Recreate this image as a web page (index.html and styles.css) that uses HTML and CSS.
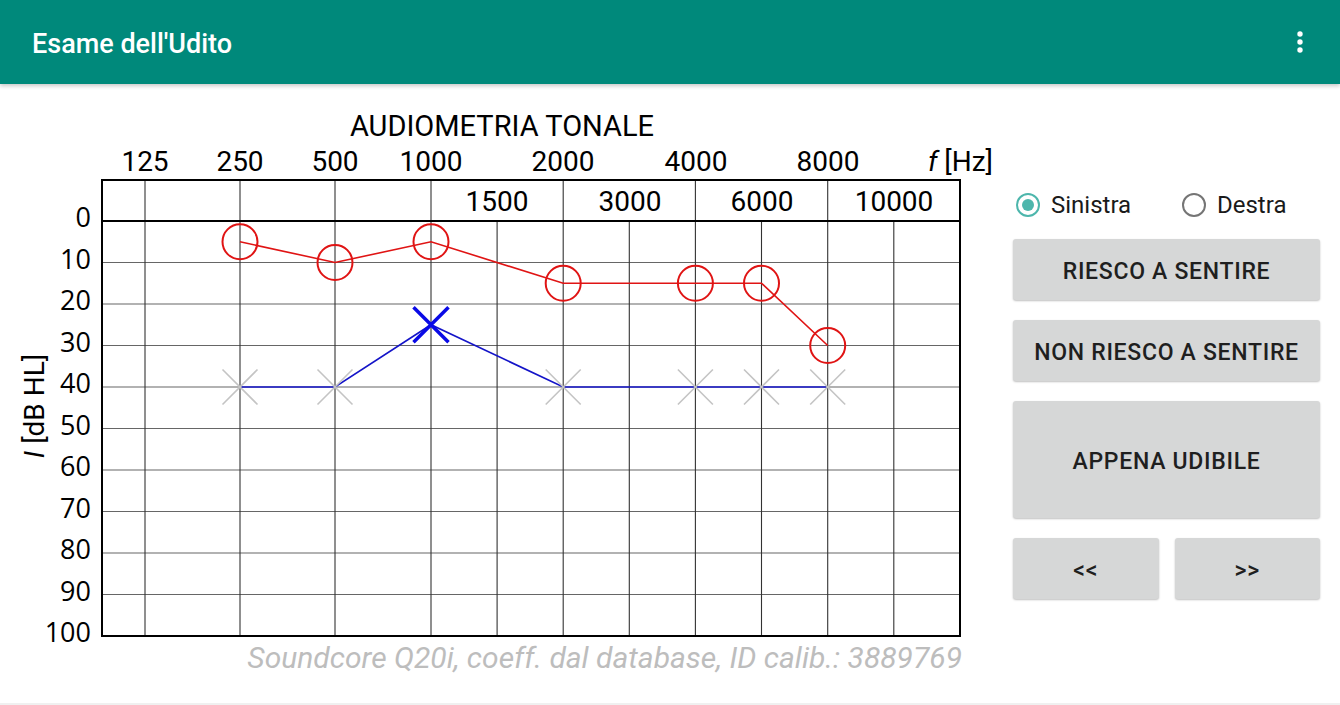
FILE: index.html
```html
<!DOCTYPE html>
<html lang="it">
<head>
    <meta charset="UTF-8">
    <meta name="viewport" content="width=device-width, initial-scale=1.0">
    <title>Esame dell'Udito</title>
    <link rel="stylesheet" href="styles.css">
</head>
<body>
    <header class="toolbar">
        <h1 class="toolbar-title">Esame dell'Udito</h1>
        <button type="button" class="overflow" aria-label="Altre opzioni">
            <svg width="6" height="22" viewBox="0 0 6 22">
                <circle cx="3" cy="3" r="2.7"/>
                <circle cx="3" cy="11" r="2.7"/>
                <circle cx="3" cy="19" r="2.7"/>
            </svg>
        </button>
    </header>

    <main class="content">
        <svg class="audiogram" width="1000" height="619" viewBox="0 84 1000 619">
            <!-- titoli -->
            <text class="chart-title" x="502" y="136">AUDIOMETRIA TONALE</text>
            <g class="freq-label">
                <text x="145" y="171">125</text>
                <text x="240" y="171">250</text>
                <text x="335" y="171">500</text>
                <text x="431" y="171">1000</text>
                <text x="563" y="171">2000</text>
                <text x="696" y="171">4000</text>
                <text x="828" y="171">8000</text>
                <text x="497" y="211">1500</text>
                <text x="630" y="211">3000</text>
                <text x="762" y="211">6000</text>
                <text x="894" y="211">10000</text>
            </g>
            <text class="axis-unit" x="993" y="171"><tspan class="var">f</tspan> [Hz]</text>
            <text class="axis-unit axis-unit-y" transform="translate(44,406) rotate(-90)"><tspan class="var">I</tspan> [dB HL]</text>

            <g class="level-label">
                <text x="91" y="227">0</text>
                <text x="91" y="268.5">10</text>
                <text x="91" y="310">20</text>
                <text x="91" y="351.5">30</text>
                <text x="91" y="393">40</text>
                <text x="91" y="434.5">50</text>
                <text x="91" y="476">60</text>
                <text x="91" y="517.5">70</text>
                <text x="91" y="559">80</text>
                <text x="91" y="600.5">90</text>
                <text x="91" y="642">100</text>
            </g>

            <!-- griglia -->
            <g class="grid-h">
                <line x1="102" x2="960" y1="262.5" y2="262.5"/>
                <line x1="102" x2="960" y1="304" y2="304"/>
                <line x1="102" x2="960" y1="345.5" y2="345.5"/>
                <line x1="102" x2="960" y1="387" y2="387"/>
                <line x1="102" x2="960" y1="428.5" y2="428.5"/>
                <line x1="102" x2="960" y1="470" y2="470"/>
                <line x1="102" x2="960" y1="511.5" y2="511.5"/>
                <line x1="102" x2="960" y1="553" y2="553"/>
                <line x1="102" x2="960" y1="594.5" y2="594.5"/>
            </g>
            <g class="grid-v">
                <line x1="145" x2="145" y1="180" y2="636"/>
                <line x1="240" x2="240" y1="180" y2="636"/>
                <line x1="335" x2="335" y1="180" y2="636"/>
                <line x1="431" x2="431" y1="180" y2="636"/>
                <line x1="563.2" x2="563.2" y1="180" y2="636"/>
                <line x1="695.4" x2="695.4" y1="180" y2="636"/>
                <line x1="827.7" x2="827.7" y1="180" y2="636"/>
                <line x1="497.1" x2="497.1" y1="221" y2="636"/>
                <line x1="629.3" x2="629.3" y1="221" y2="636"/>
                <line x1="761.5" x2="761.5" y1="221" y2="636"/>
                <line x1="893.8" x2="893.8" y1="221" y2="636"/>
            </g>
            <line class="zero-line" x1="102" x2="960" y1="221" y2="221"/>
            <rect class="frame" x="102" y="180" width="858" height="456"/>

            <!-- curva destra (blu) -->
            <polyline class="curve-blue" points="240,387 335,387 431,324.75 563.2,387 695.4,387 761.5,387 827.7,387"/>
            <g class="mark-pending">
                <path d="M222.5 369.5 L257.5 404.5 M257.5 369.5 L222.5 404.5"/>
                <path d="M317.5 369.5 L352.5 404.5 M352.5 369.5 L317.5 404.5"/>
                <path d="M545.7 369.5 L580.7 404.5 M580.7 369.5 L545.7 404.5"/>
                <path d="M677.9 369.5 L712.9 404.5 M712.9 369.5 L677.9 404.5"/>
                <path d="M744 369.5 L779 404.5 M779 369.5 L744 404.5"/>
                <path d="M810.2 369.5 L845.2 404.5 M845.2 369.5 L810.2 404.5"/>
            </g>

            <!-- curva sinistra (rossa) -->
            <polyline class="curve-red" points="240,241.75 335,262.5 431,241.75 563.2,283.25 695.4,283.25 761.5,283.25 827.7,345.5"/>
            <g class="mark-red">
                <circle cx="240" cy="241.75" r="17.5"/>
                <circle cx="335" cy="262.5" r="17.5"/>
                <circle cx="431" cy="241.75" r="17.5"/>
                <circle cx="563.2" cy="283.25" r="17.5"/>
                <circle cx="695.4" cy="283.25" r="17.5"/>
                <circle cx="761.5" cy="283.25" r="17.5"/>
                <circle cx="827.7" cy="345.5" r="17.5"/>
            </g>
            <path class="mark-blue" d="M413.5 307.25 L448.5 342.25 M448.5 307.25 L413.5 342.25"/>

            <text class="chart-note" x="962" y="668">Soundcore Q20i, coeff. dal database, ID calib.: 3889769</text>
        </svg>

        <aside class="controls">
            <div class="ear-select">
                <label class="radio checked"><span class="radio-mark"></span>Sinistra</label>
                <label class="radio"><span class="radio-mark"></span>Destra</label>
            </div>
            <button type="button" class="btn">Riesco a sentire</button>
            <button type="button" class="btn">Non riesco a sentire</button>
            <button type="button" class="btn btn-tall">Appena udibile</button>
            <div class="nav-row">
                <button type="button" class="btn">&lt;&lt;</button>
                <button type="button" class="btn">&gt;&gt;</button>
            </div>
        </aside>
    </main>
    <div class="navbar-edge"></div>
</body>
</html>
```

FILE: styles.css
```css
body {
    margin: 0;
    font-family: Roboto, "Liberation Sans", sans-serif;
    background-color: #ffffff;
    color: #212121;
    height: 705px;
    overflow: hidden;
}

.toolbar {
    height: 84px;
    background-color: #00897b;
    display: flex;
    align-items: center;
    justify-content: space-between;
    padding: 0 37px 0 32px;
    box-shadow: 0 2px 4px rgba(0, 0, 0, 0.22);
    position: relative;
    z-index: 1;
}

.toolbar-title {
    margin: 0;
    padding-top: 4px;
    font-size: 27px;
    font-weight: 500;
    color: #ffffff;
}

.overflow {
    background: none;
    border: none;
    padding: 0;
    display: flex;
    fill: #ffffff;
}

.content {
    display: flex;
    height: 619px;
}

.audiogram {
    flex: none;
    display: block;
}

.chart-title,
.freq-label text {
    font-family: Roboto, sans-serif;
    font-size: 28px;
    text-anchor: middle;
    fill: #000000;
}

.chart-title {
    font-size: 29px;
}

.axis-unit {
    font-family: Roboto, sans-serif;
    font-size: 28px;
    text-anchor: end;
    fill: #000000;
}

.axis-unit-y {
    text-anchor: middle;
}

.axis-unit .var {
    font-style: italic;
}

.level-label text {
    font-family: "Open Sans", sans-serif;
    font-size: 27px;
    text-anchor: end;
    fill: #000000;
}

.grid-h line {
    stroke: #666666;
    stroke-width: 1.2;
}

.grid-v line {
    stroke: #333333;
    stroke-width: 1.1;
}

.zero-line {
    stroke: #000000;
    stroke-width: 2;
}

.frame {
    fill: none;
    stroke: #000000;
    stroke-width: 2;
}

.curve-blue {
    fill: none;
    stroke: #1414c8;
    stroke-width: 1.6;
}

.mark-pending path {
    fill: none;
    stroke: #c4c4c4;
    stroke-width: 1.6;
}

.curve-red {
    fill: none;
    stroke: #e01414;
    stroke-width: 1.6;
}

.mark-red circle {
    fill: none;
    stroke: #e01414;
    stroke-width: 2;
}

.mark-blue {
    fill: none;
    stroke: #0a0ae6;
    stroke-width: 3.5;
}

.chart-note {
    font-family: Roboto, sans-serif;
    font-style: italic;
    font-size: 30px;
    text-anchor: end;
    fill: #bdbdbd;
}

.controls {
    width: 307px;
    margin-left: 13px;
    padding-top: 105px;
    display: flex;
    flex-direction: column;
    gap: 20px;
}

.ear-select {
    display: grid;
    grid-template-columns: 166px auto;
    height: 28px;
    padding-top: 2px;
    align-items: center;
}

.radio {
    display: flex;
    align-items: center;
    gap: 11px;
    font-size: 24px;
    color: #1a1a1a;
}

.radio-mark {
    width: 20px;
    height: 20px;
    margin-left: 3px;
    border: 2.7px solid #757575;
    border-radius: 50%;
    display: flex;
    align-items: center;
    justify-content: center;
}

.radio.checked .radio-mark {
    border-color: #4db6ac;
}

.radio.checked .radio-mark::after {
    content: "";
    width: 12px;
    height: 12px;
    border-radius: 50%;
    background-color: #4db6ac;
}

.btn {
    height: 61px;
    border: none;
    border-radius: 3px;
    background-color: #d6d7d7;
    box-shadow: 0 1px 2px rgba(0, 0, 0, 0.25);
    font-family: Roboto, sans-serif;
    font-size: 23px;
    font-weight: 500;
    letter-spacing: 0.7px;
    color: #1f1f1f;
    text-transform: uppercase;
    padding: 4px 0 0;
}

.btn-tall {
    height: 117px;
}

.nav-row {
    display: flex;
    gap: 16px;
}

.nav-row .btn {
    flex: 1;
}

.navbar-edge {
    height: 2px;
    background-color: #f0f0f0;
}
```
